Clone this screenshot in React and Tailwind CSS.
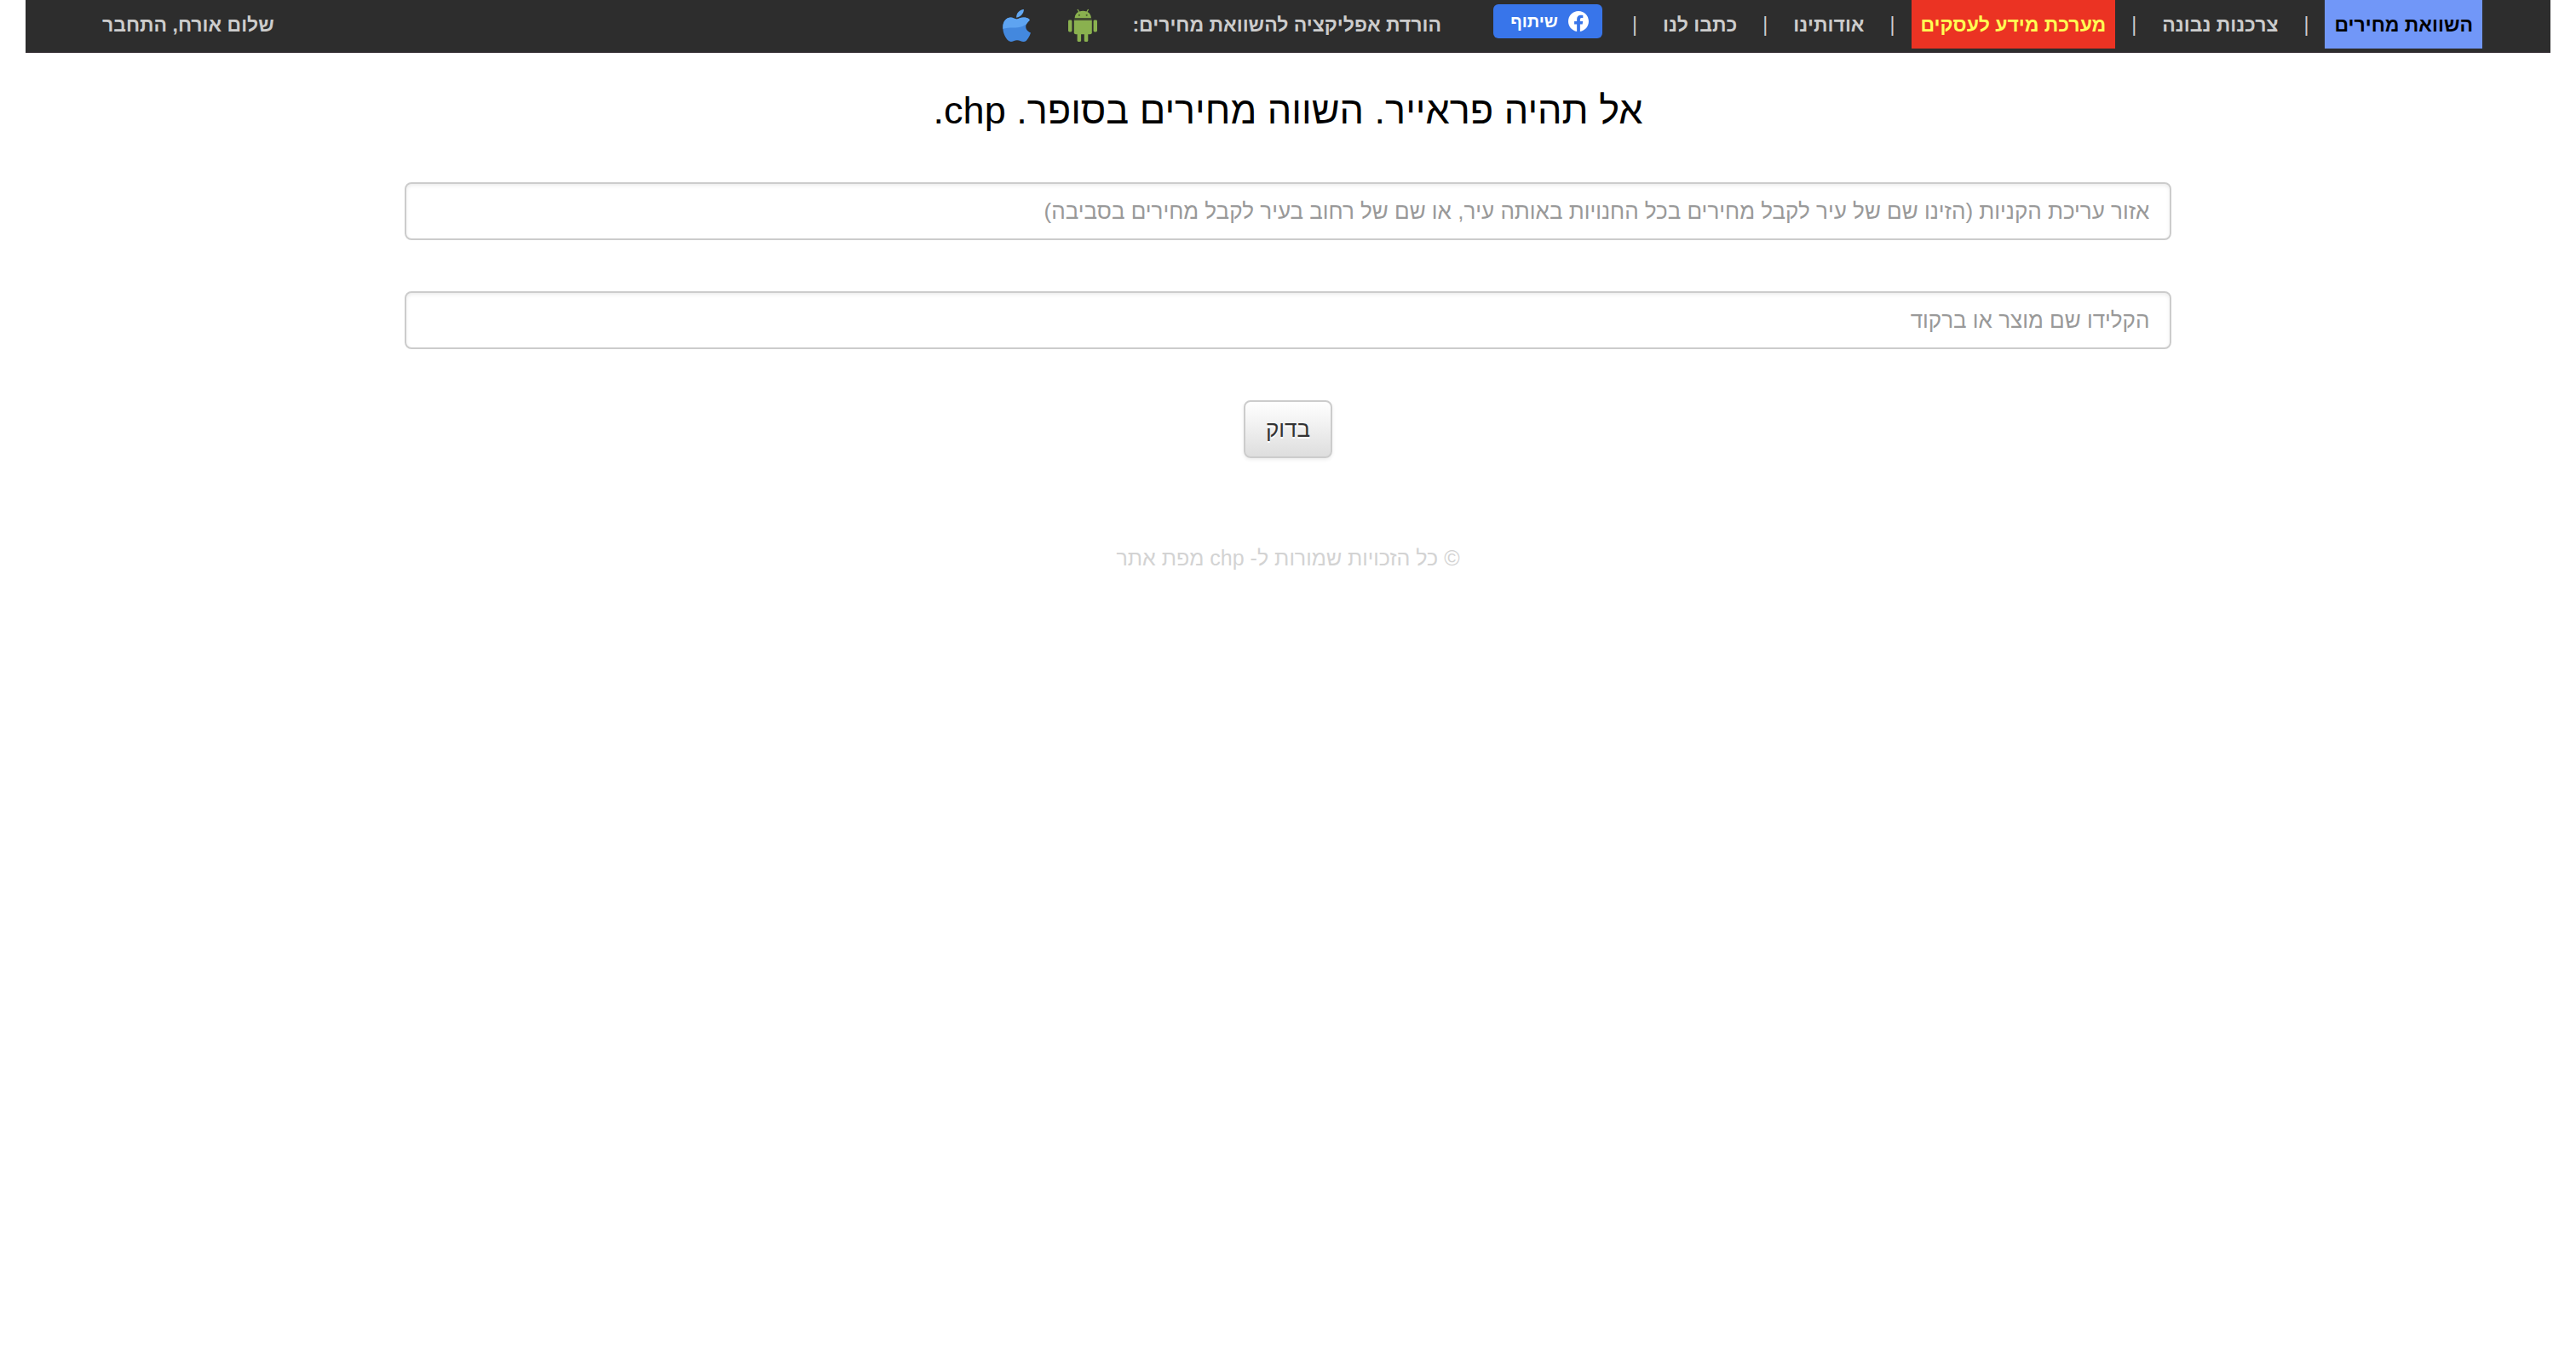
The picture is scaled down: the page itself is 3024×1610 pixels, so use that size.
import React, { useState } from "react";

const links = [
  { label: "השוואת מחירים", style: "bg-[#7197f8] text-black" },
  { label: "צרכנות נבונה", style: "text-[#cccccc]" },
  { label: "מערכת מידע לעסקים", style: "bg-[#eb3323] text-[#ffff54]" },
  { label: "אודותינו", style: "text-[#cccccc]" },
  { label: "כתבו לנו", style: "text-[#cccccc]" },
];

function FacebookIcon() {
  return (
    <svg viewBox="0 0 24 24" className="size-6" aria-hidden="true">
      <path
        fill="#fff"
        d="M24 12.07C24 5.4 18.63 0 12 0S0 5.4 0 12.07c0 6.03 4.39 11.02 10.13 11.93v-8.44H7.08v-3.49h3.05V9.41c0-3.02 1.79-4.69 4.53-4.69 1.31 0 2.68.23 2.68.23v2.97h-1.51c-1.49 0-1.95.93-1.95 1.88v2.27h3.32l-.53 3.49h-2.79V24C19.61 23.09 24 18.1 24 12.07z"
      />
    </svg>
  );
}

function AndroidIcon() {
  return (
    <svg viewBox="0 0 36 40" className="h-10 w-9" aria-hidden="true">
      <g fill="#8ab14f">
        <path d="M8.600 11.200C8.800 7.600 10.600 5.200 13 4L11.400 1.300l1.200-.6L14.200 3.400a13 13 0 0 1 8.200 0L24 .7l1.200.6L23.600 4c2.400 1.200 4.200 3.600 4.400 7.200z" />
        <path d="M7.800 13.800h21v14.400a2 2 0 0 1-2 2h-17a2 2 0 0 1-2-2z" />
        <rect x="1" y="13.600" width="4.400" height="13.800" rx="1.400" />
        <rect x="30.600" y="13.600" width="4.400" height="13.800" rx="1.400" />
        <rect x="11.600" y="28" width="4.500" height="11" rx="1.600" />
        <rect x="19.800" y="28" width="4.500" height="11" rx="1.600" />
      </g>
      <path d="M7.800 12.500h21" stroke="#5b7337" strokeWidth="1.200" opacity=".5" />
      <circle cx="13.900" cy="7.800" r="1.100" fill="#4c5f30" />
      <circle cx="22.700" cy="7.800" r="1.100" fill="#4c5f30" />
    </svg>
  );
}

function AppleIcon() {
  return (
    <svg viewBox="0 0 34 40" className="h-10 w-[34px]" aria-hidden="true">
      <defs>
        <clipPath id="apple-outline">
          <path d="M16.800 12.400c2.200-.3 4.200-1.800 7.400-1.800 3 0 5.700.2 7.600 2.600-1.200 2.400-4.600 4.200-4.600 8 0 3.600 2.600 5.800 5.800 7.200-1.200 4-3.200 7-5.400 9.600-2.200 1.600-4.600 1-6.400.2-2.800-1.200-5.600-1.200-8.400 0-2 .9-4.400 1.200-6-.4C3 34.200.3 28.600.3 22.200c0-7 4-11.600 9.200-11.600 3 0 5 2.100 7.300 1.800z" />
        </clipPath>
      </defs>
      <g clipPath="url(#apple-outline)">
        <path fill="#4388de" d="M0 8h34v32H0z" />
        <path fill="#5ea4f1" d="M0 8h34v9c-6 .5-9 4.500-16 5.200-6 .6-12-.6-18 1.800z" />
      </g>
      <path fill="#62a8f3" d="M16.200 10.800C15.700 5.900 19.600 1.300 24.900 1c.2 4.200-3.700 9-8.700 9.800z" />
    </svg>
  );
}

const fieldClass =
  "w-full rounded-lg border-2 border-[#cccccc] bg-white px-6 py-4 text-[26px] leading-8 text-[#333333] placeholder:text-[#999999] shadow-[inset_0_2px_4px_rgba(0,0,0,0.075)] outline-none";

export default function App() {
  const [area, setArea] = useState("");
  const [product, setProduct] = useState("");

  return (
    <div dir="rtl" className="bg-white px-[30px] font-['Liberation_Sans',Arial,sans-serif]">
      <header className="flex h-[62px] items-start justify-between border-b border-[#272026] bg-[#2d2d2d] px-20 text-[23px] font-bold text-[#cccccc]">
        <nav className="flex items-start">
          {links.map((link) => (
            <React.Fragment key={link.label}>
              <a href="#" className={"px-[11px] pt-[13px] pb-3 leading-8 whitespace-nowrap " + link.style}>
                {link.label}
              </a>
              <span className="w-11 pt-[13px] text-center leading-8 font-normal">|</span>
            </React.Fragment>
          ))}
          <button
            type="button"
            className="ms-4 mt-[5px] flex h-10 w-32 items-center gap-3 rounded-md bg-[#3875ea] ps-4 text-xl text-white"
          >
            <FacebookIcon />
            שיתוף
          </button>
          <span className="ms-[61px] pt-[13px] leading-8 whitespace-nowrap">הורדת אפליקציה להשוואת מחירים:</span>
          <a href="#" aria-label="Android" className="ms-10 pt-2.5">
            <AndroidIcon />
          </a>
          <a href="#" aria-label="iOS" className="ms-[42px] pt-2.5">
            <AppleIcon />
          </a>
        </nav>
        <a href="#" className="px-2.5 pt-[13px] leading-8 whitespace-nowrap">
          שלום אורח, התחבר
        </a>
      </header>

      <main className="mx-auto w-7/10">
        <h1 className="mt-[38px] text-center text-[45px] leading-[60px] text-black">אל תהיה פראייר. השווה מחירים בסופר. chp.</h1>
        <form onSubmit={(e) => e.preventDefault()} className="mt-[54px] flex flex-col items-center gap-[60px]">
          <input
            type="text"
            aria-label="אזור עריכת הקניות"
            value={area}
            onChange={(e) => setArea(e.target.value)}
            placeholder="אזור עריכת הקניות (הזינו שם של עיר לקבל מחירים בכל החנויות באותה עיר, או שם של רחוב בעיר לקבל מחירים בסביבה)"
            className={fieldClass}
          />
          <input
            type="text"
            aria-label="שם מוצר או ברקוד"
            value={product}
            onChange={(e) => setProduct(e.target.value)}
            placeholder="הקלידו שם מוצר או ברקוד"
            className={fieldClass}
          />
          <button
            type="submit"
            className="rounded-lg border-2 border-[#cccccc] bg-linear-to-b from-white to-[#dedede] px-6 py-4 text-[26px] leading-8 text-[#333333] shadow-[0_2px_4px_rgba(0,0,0,0.075)] text-shadow-[0_2px_0_#ffffff]"
          >
            בדוק
          </button>
        </form>
      </main>

      <footer className="mt-[101px] text-center text-[25px] leading-8 text-[#d3d3d3]">
        © כל הזכויות שמורות ל- chp{" "}
        <a href="#">מפת אתר</a>
      </footer>
    </div>
  );
}
